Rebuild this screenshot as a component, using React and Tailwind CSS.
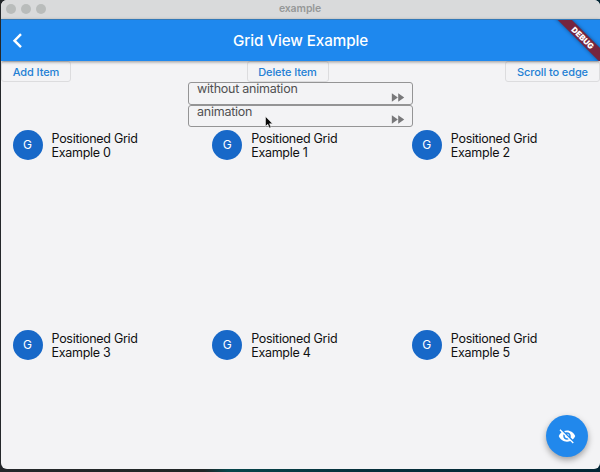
import React from "react";
import { MdVisibilityOff, MdFastForward } from "react-icons/md";

const items = [0, 1, 2, 3, 4, 5];

function TitleBar() {
  return (
    <div className="relative flex h-[19px] shrink-0 items-center bg-[#d9dadb] pb-px pl-[5px]">
      <div className="flex gap-[5px]">
        <span className="size-[10px] rounded-full bg-[#b9bcbb]" />
        <span className="size-[10px] rounded-full bg-[#b9bcbb]" />
        <span className="size-[10px] rounded-full bg-[#b9bcbb]" />
      </div>
      <span className="absolute inset-x-0 top-0 pr-px text-center text-[10.5px] leading-[17px] font-semibold tracking-[-0.1px] text-[#969898]">
        example
      </span>
    </div>
  );
}

function AppBar() {
  return (
    <div className="relative z-10 flex h-[42px] shrink-0 items-center overflow-visible border-t border-[#3379b8] bg-[#1e88ee] shadow-[0_1px_3px_rgba(0,0,0,0.4)]">
      <svg className="ml-[11px] h-[16px] w-[11px]" viewBox="0 0 11 16" fill="none">
        <path d="M9 1.2 2.5 7.7 9 14.2" stroke="white" strokeWidth="2.4" />
      </svg>
      <span className="absolute inset-x-0 pt-px text-center text-[15.2px] font-medium tracking-[-0.08px] text-white">
        Grid View Example
      </span>
      <div className="absolute top-0 right-0 h-[41px] w-[50px] overflow-hidden">
        <div className="absolute top-[12.5px] left-[-3px] flex h-[9.5px] w-[72px] rotate-45 items-center justify-center bg-[#76253f] text-[8px] leading-none font-black text-white shadow-[0_0_4px_rgba(0,0,0,0.45)]">
          <span>DEBUG</span>
        </div>
      </div>
    </div>
  );
}

function ActionButton({ children, className }) {
  return (
    <button
      className={`h-[21px] rounded-[3px] border border-[#dcdcde] pt-px text-center text-[11px] leading-[19px] font-medium tracking-[-0.1px] whitespace-nowrap text-[#2380d4] ${className}`}
    >
      {children}
    </button>
  );
}

function ModeBox({ label }) {
  return (
    <div className="flex h-[22.5px] w-[225px] justify-between rounded-[3px] border border-[#949495] pr-[6px] pl-[8px]">
      <span className="text-[12.5px] leading-[12px] tracking-[-0.24px] text-[#505051]">{label}</span>
      <MdFastForward className="mt-[5.5px] size-[17px] text-[#78787a]" />
    </div>
  );
}

function GridTile({ index }) {
  return (
    <div className="h-[200px]">
      <div className="flex items-center gap-[9px] pt-[3px] pl-[11.5px]">
        <div className="flex size-[30px] items-center justify-center rounded-full bg-[#1768c8] text-[12px] text-white">
          G
        </div>
        <div className="pt-[2px] text-[12.5px] leading-[14px] tracking-[-0.28px] text-[#101011]">
          Positioned Grid
          <br />
          Example {index}
        </div>
      </div>
    </div>
  );
}

export default function App() {
  return (
    <div className="relative h-[472px] w-[600px] overflow-hidden bg-[linear-gradient(90deg,#24272a,#202526_34%,#06454b_38%,#052f3b_60%,#032635)] pl-px font-['Inter','Liberation_Sans',sans-serif]">
      <div className="flex h-[469px] flex-col overflow-hidden rounded-[6px] bg-[#f3f3f5]">
        <TitleBar />
        <AppBar />
        <div className="flex h-[21px] shrink-0 justify-between">
          <ActionButton className="w-[70px]">Add Item</ActionButton>
          <ActionButton className="mr-px w-[82px]">Delete Item</ActionButton>
          <ActionButton className="w-[95px]">Scroll to edge</ActionButton>
        </div>
        <div className="flex shrink-0 flex-col items-center">
          <ModeBox label="without animation" />
          <ModeBox label="animation" />
        </div>
        <div className="grid grid-cols-3">
          {items.map((index) => (
            <GridTile key={index} index={index} />
          ))}
        </div>
      </div>
      <button className="absolute top-[415px] left-[546px] flex size-[42px] items-center justify-center rounded-full bg-[#2188ec] text-white shadow-[0_3px_6px_rgba(0,0,0,0.35)]">
        <MdVisibilityOff className="size-[18px]" />
      </button>
      <svg className="absolute top-[116px] left-[265px] h-[13px] w-[8px]" viewBox="0 0 8 13">
        <path d="M.5.5v9.8l2.3-2 1.5 3.6 1.7-.7-1.5-3.5h3z" fill="#080808" stroke="white" strokeWidth=".5" />
      </svg>
    </div>
  );
}
